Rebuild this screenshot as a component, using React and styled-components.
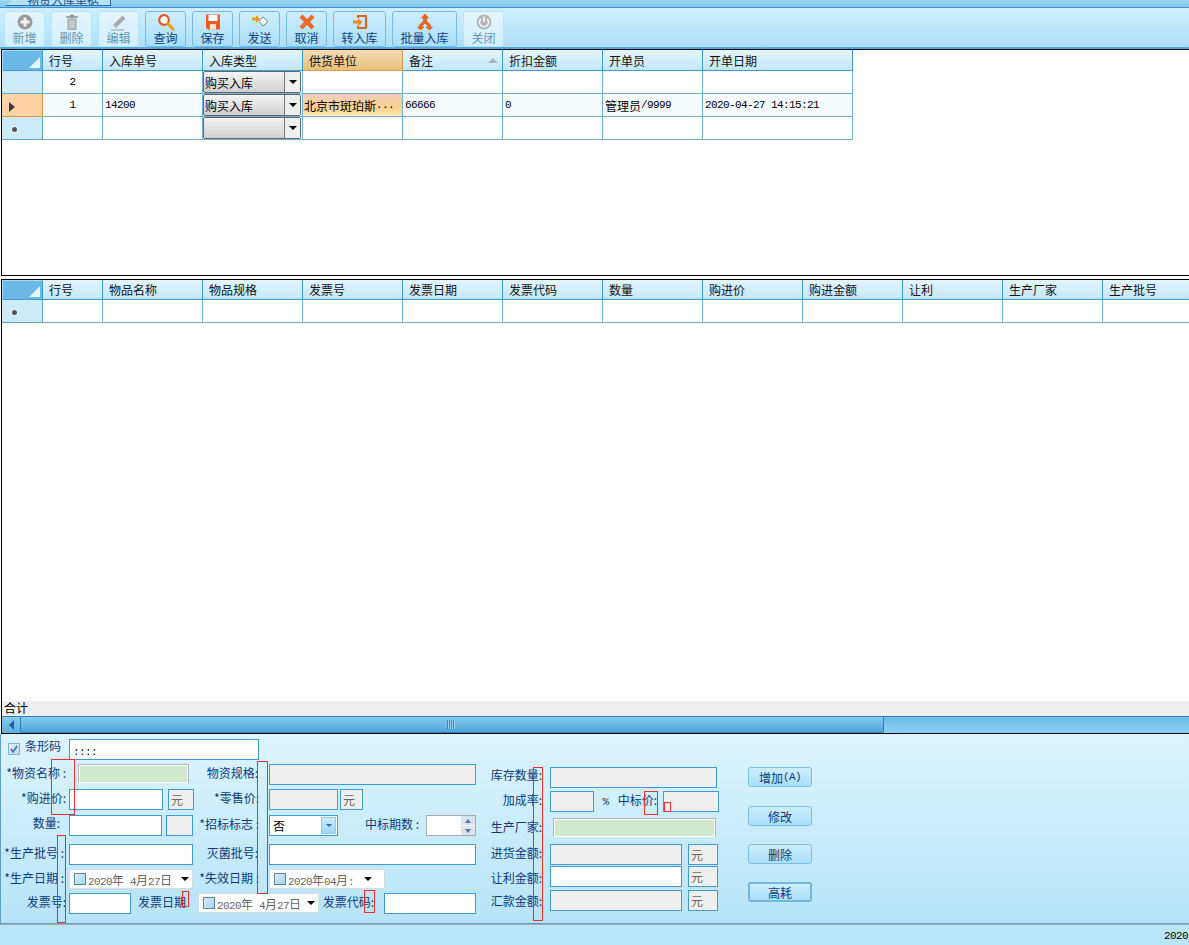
import React from "react";
import styled, { createGlobalStyle } from "styled-components";

const GlobalStyle = createGlobalStyle`
    html, body {
        margin: 0;
        padding: 0;
        background: #fff;
    }
    body {
        font-family: "Noto Sans CJK SC", "Liberation Sans", sans-serif;
        font-size: 12px;
        color: #000;
    }
    * { box-sizing: border-box; }
`;

const Page = styled.div`
    position: relative;
    width: 1189px;
    height: 945px;
    overflow: hidden;
    display: flex;
    flex-direction: column;
    background: #fff;
`;

const TopStrip = styled.div`
    height: 7px;
    flex: none;
    overflow: hidden;
    padding-left: 5px;
    background: linear-gradient(#9ad5f1, #7fc6ea);
`;

const Tab = styled.div`
    width: 106px;
    height: 6px;
    overflow: hidden;
    padding-left: 22px;
    line-height: 0;
    color: #1a4f8f;
    background: #b4e2f8;
    border-right: 1px solid #2d6fa8;
    border-bottom: 1px solid #2d6fa8;
    clip-path: polygon(8px 0, 100% 0, 100% 100%, 0 100%);
`;

const Toolbar = styled.div`
    height: 42px;
    flex: none;
    display: flex;
    gap: 6px;
    padding: 3px 0 0 4px;
    border-top: 1px solid #3d8fcf;
    border-bottom: 2px solid #53a8de;
    background: linear-gradient(#cfeffe, #aedff8);
`;

const ToolButton = styled.div`
    width: ${(p) => p.$w || 41}px;
    height: 36px;
    flex: none;
    display: flex;
    flex-direction: column;
    align-items: center;
    border-radius: 3px;
    border: 1px solid ${(p) => (p.$off ? "#b6e4f8" : "#74bce4")};
    background: ${(p) =>
        p.$off
            ? "linear-gradient(#e3f6ff, #d2f0fe)"
            : "linear-gradient(#cfeefe, #a9def8)"};
    color: ${(p) => (p.$off ? "#5f97b2" : "#0d3f80")};
    line-height: 13px;

    & svg {
        display: block;
        width: 18px;
        height: 18px;
        margin-top: 1px;
    }
`;

const GridPane = styled.div`
    margin-left: 1px;
    flex: none;
    height: ${(p) => p.$h}px;
    display: flex;
    flex-direction: column;
    overflow: hidden;
    background: #fff;
    border-left: 1px solid #000;
    border-top: 1px solid #000;
    border-bottom: 1px solid #000;
`;

const PaneGap = styled.div`
    height: 3px;
    flex: none;
`;

const GridBody = styled.div`
    flex: 1;
    min-height: 0;
    overflow: hidden;
`;

const GridRow = styled.div`
    display: flex;
    width: max-content;
    height: ${(p) => p.$h || 23}px;
    background: ${(p) => (p.$active ? "#f5fbfe" : "#fff")};
`;

const HeadCell = styled.div`
    width: ${(p) => p.$w || 100}px;
    flex: none;
    position: relative;
    padding-left: 6px;
    display: flex;
    align-items: center;
    color: #111;
    border-right: 1px solid ${(p) => (p.$hot ? "#e8983f" : "#3f9ad6")};
    border-bottom: 1px solid ${(p) => (p.$hot ? "#e8983f" : "#3f9ad6")};
    background: ${(p) =>
        p.$hot
            ? "linear-gradient(#f6dcb4, #e6c07c)"
            : "linear-gradient(#e4f6ff, #c2e6f9)"};
`;

const SortMark = styled.span`
    position: absolute;
    right: 4px;
    top: 8px;
    width: 0;
    height: 0;
    border-left: 5px solid transparent;
    border-right: 5px solid transparent;
    border-bottom: 5px solid #a9b4ba;
`;

const Corner = styled.div`
    width: 41px;
    flex: none;
    position: relative;
    background: #6cb9e8;
    border: 1px solid #a5daf5;
    border-right: 1px solid #3f9ad6;
    border-bottom: 1px solid #3f9ad6;

    &::after {
        content: "";
        position: absolute;
        right: 2px;
        bottom: 2px;
        width: 0;
        height: 0;
        border-left: 11px solid transparent;
        border-bottom: 11px solid #e6f6fd;
    }
`;

const RowHead = styled.div`
    width: 41px;
    flex: none;
    display: flex;
    align-items: center;
    padding-left: ${(p) => (p.$active ? 7 : 10)}px;
    background: ${(p) => (p.$active ? "#fdd2a4" : "#cdeafa")};
    border-right: 1px solid ${(p) => (p.$active ? "#e8983f" : "#5ba7d6")};
    border-bottom: 1px solid ${(p) => (p.$active ? "#e8983f" : "#5ba7d6")};
`;

const RowArrow = styled.span`
    margin-top: 3px;
    width: 0;
    height: 0;
    border-top: 5px solid transparent;
    border-bottom: 5px solid transparent;
    border-left: 6px solid #3d3d3d;
`;

const NewDot = styled.span`
    margin-top: 3px;
    width: 5px;
    height: 5px;
    border-radius: 50%;
    background: #555;
    box-shadow: 0 0 0 1px #e8f4fa;
`;

const Cell = styled.div`
    width: ${(p) => p.$w || 100}px;
    flex: none;
    display: flex;
    align-items: center;
    justify-content: ${(p) => (p.$center ? "center" : "flex-start")};
    padding-left: ${(p) => (p.$center ? 0 : p.$hot ? 1 : 2)}px;
    white-space: nowrap;
    border-right: 1px solid #6fb0d5;
    border-bottom: 1px solid #6fb0d5;
    background: ${(p) =>
        p.$hot ? "linear-gradient(#f1cdbb, #fbd290 65%, #ffe9ba)" : "transparent"};
`;

const Mono = styled.span`
    font-family: "Liberation Mono", monospace;
    font-size: 11px;
    letter-spacing: -0.6px;
`;

const ComboCell = styled.div`
    width: 100px;
    flex: none;
    display: flex;
    align-items: stretch;
    padding: 0 1px 0 0;
    border-right: 1px solid #6fb0d5;
    border-bottom: 1px solid #6fb0d5;
`;

const Combo = styled.div`
    flex: 1;
    display: flex;
    align-items: center;
    justify-content: space-between;
    padding-left: 1px;
    border: 1px solid #666;
    border-radius: 2px;
    background: linear-gradient(#f4f4f4, #d0d0d0);
`;

const ComboArrow = styled.div`
    width: 16px;
    align-self: stretch;
    display: flex;
    align-items: center;
    justify-content: center;
    border-left: 1px solid #777;
    background: #efefef;

    &::after {
        content: "";
        width: 0;
        height: 0;
        border-left: 4px solid transparent;
        border-right: 4px solid transparent;
        border-top: 4px solid #000;
    }
`;

const SumBar = styled.div`
    height: 15px;
    flex: none;
    padding-left: 2px;
    line-height: 13px;
    background: #efefef;
`;

const ScrollBar = styled.div`
    height: 17px;
    flex: none;
    display: flex;
    border-top: 1px solid #2c7fbf;
    background: linear-gradient(#6fbce8, #8bcff1);
`;

const ScrollLeft = styled.div`
    width: 18px;
    flex: none;
    display: flex;
    align-items: center;
    justify-content: center;
    background: linear-gradient(#8acbee, #5cafe0);

    &::after {
        content: "";
        width: 0;
        height: 0;
        border-top: 5px solid transparent;
        border-bottom: 5px solid transparent;
        border-right: 5px solid #1f5fa5;
    }
`;

const ScrollThumb = styled.div`
    width: 864px;
    flex: none;
    display: flex;
    align-items: center;
    justify-content: center;
    border: 1px solid #2c7fbf;
    border-top: none;
    border-radius: 0 0 2px 2px;
    background: linear-gradient(#86ccf0, #4ea3da);
`;

const Grip = styled.div`
    width: 8px;
    height: 9px;
    margin-left: -2px;
    background: repeating-linear-gradient(90deg, #3f86bd 0 1px, #9ad3f1 1px 2px);
`;

const Form = styled.div`
    height: 190px;
    flex: none;
    display: flex;
    padding-top: 5px;
    background: linear-gradient(#dcf5ff, #b8e3f8);
    box-shadow: inset 1px 0 0 #5a9fcf, inset 0 -1px 0 #5a9fcf;
`;

const LeftBlock = styled.div`
    width: 476px;
    flex: none;
`;

const RightBlock = styled.div`
    width: 242px;
    flex: none;
    margin: 28px 0 0 2px;
`;

const ButtonBlock = styled.div`
    width: 64px;
    flex: none;
    margin: 28px 0 0 28px;
    display: flex;
    flex-direction: column;
    gap: 18px;

    & > :nth-child(2) {
        margin-top: 1px;
    }
`;

const FormRow = styled.div`
    display: flex;
    align-items: flex-start;
    height: ${(p) => p.$h}px;
`;

const Label = styled.div`
    width: ${(p) => p.$w}px;
    height: 21px;
    flex: none;
    padding-right: ${(p) => p.$pr}px;
    text-align: right;
    line-height: ${(p) => p.$lh || 18}px;
    white-space: nowrap;
    color: #0b3a7a;
`;

const Field = styled.div`
    width: ${(p) => p.$w}px;
    height: 21px;
    flex: none;
    margin-left: ${(p) => p.$ml || 0}px;
    border: 1px solid #3f9bd8;
    background: ${(p) => (p.$gray ? "#efefef" : "#fff")};
`;

const Unit = styled(Field)`
    padding-left: 2px;
    line-height: 19px;
    color: #666;
    background: #efefef;
`;

const GreenField = styled.div`
    width: ${(p) => p.$w}px;
    height: 19px;
    flex: none;
    margin-left: ${(p) => p.$ml || 0}px;
    border: 1px solid #b5b5b5;
    border-bottom: none;
    box-shadow: inset 0 0 0 1px #fff;
    background: #cfe9cf;
`;

const BarcodeBox = styled(Field)`
    padding-left: 3px;
    line-height: 20px;
`;

const CheckWrap = styled.div`
    width: 69px;
    flex: none;
    display: flex;
    align-items: flex-start;
    gap: 5px;
    padding-left: 8px;
    line-height: 14px;
    color: #0b3a7a;
`;

const CheckBox = styled.div`
    width: 12px;
    height: 12px;
    flex: none;
    margin-top: 4px;
    border: 1px solid #7fb6d6;
    background: linear-gradient(135deg, #e8e8f4, #bcdcf2);

    & svg {
        display: block;
        width: 10px;
        height: 10px;
    }
`;

const DateBox = styled.div`
    width: ${(p) => p.$w}px;
    height: 20px;
    flex: none;
    display: flex;
    align-items: center;
    gap: 2px;
    padding-left: 4px;
    color: #666;
    white-space: nowrap;
    background: #fff;
    border: 1px solid #d6dde0;
    border-radius: 2px;
`;

const DateCheck = styled.div`
    width: 12px;
    height: 12px;
    flex: none;
    border: 1px solid #55859f;
    background: linear-gradient(135deg, #d5ecfb, #a6d6f3);
`;

const DateArrow = styled.div`
    margin-left: auto;
    margin-right: ${(p) => p.$mr}px;
    width: 0;
    height: 0;
    border-left: 4px solid transparent;
    border-right: 4px solid transparent;
    border-top: 4px solid #000;
`;

const Select = styled.div`
    width: 69px;
    height: 21px;
    flex: none;
    display: flex;
    align-items: center;
    justify-content: space-between;
    padding: 0 1px 0 3px;
    border: 1px solid #3f9bd8;
    background: #fff;
`;

const SelectButton = styled.div`
    width: 15px;
    height: 17px;
    display: flex;
    align-items: center;
    justify-content: center;
    border: 1px solid #8ccbec;
    background: linear-gradient(#cdeafa, #9ed6f3);

    &::after {
        content: "";
        width: 0;
        height: 0;
        border-left: 3px solid transparent;
        border-right: 3px solid transparent;
        border-top: 3px solid #2c6ca8;
    }
`;

const Spinner = styled.div`
    width: 50px;
    height: 21px;
    flex: none;
    display: flex;
    justify-content: flex-end;
    border: 1px solid #aaa;
    background: #fff;
`;

const SpinButtons = styled.div`
    width: 14px;
    display: flex;
    flex-direction: column;
    gap: 1px;
`;

const SpinButton = styled.div`
    flex: 1;
    display: flex;
    align-items: center;
    justify-content: center;
    background: #d9e4ec;

    &::after {
        content: "";
        width: 0;
        height: 0;
        border-left: 3px solid transparent;
        border-right: 3px solid transparent;
        ${(p) => (p.$down ? "border-top" : "border-bottom")}: 4px solid #5c6fa8;
    }
`;

const Percent = styled.div`
    width: 23px;
    flex: none;
    text-align: center;
    line-height: 18px;
    color: #0b3a7a;
`;

const ActionButton = styled.div`
    width: 64px;
    height: 20px;
    display: flex;
    align-items: center;
    justify-content: center;
    border-radius: 3px;
    color: #0b3a7a;
    border: ${(p) => (p.$focus ? "2px solid #73b6e0" : "1px solid #7cc0e6")};
    background: linear-gradient(#cdeefe, #aadff8);
`;

const StatusBar = styled.div`
    flex: 1;
    display: flex;
    align-items: flex-end;
    justify-content: flex-end;
    padding: 0 1px 3px 0;
    border-top: 1px solid #a9a9a9;
    background: #bbe6fa;
`;

const RedMark = styled.div`
    position: absolute;
    left: ${(p) => p.$x}px;
    top: ${(p) => p.$y}px;
    width: ${(p) => p.$w}px;
    height: ${(p) => p.$h}px;
    border: 1px solid #f02d2d;
    pointer-events: none;
`;

const PlusIcon = () => (
    <svg viewBox="0 0 18 18">
        <circle cx="9" cy="9" r="7.5" fill="#9a9a9a" />
        <path d="M9 4.5v9M4.5 9h9" stroke="#f2f2f2" strokeWidth="3" />
    </svg>
);

const TrashIcon = () => (
    <svg viewBox="0 0 18 18">
        <path d="M3 4h12M7 2.5h4" stroke="#8c8c8c" strokeWidth="1.6" />
        <path d="M4.5 5.5h9V17h-9z" fill="#a8a8a8" />
        <path d="M7 7v8.5M9 7v8.5M11 7v8.5" stroke="#e4e4e4" strokeWidth="1" />
    </svg>
);

const PencilIcon = () => (
    <svg viewBox="0 0 18 18">
        <path d="M3 12 12.5 2.5l3 3L6 15H3z" fill="#a9a9a9" />
        <path d="M3 12l3 3H3z" fill="#e8e8e8" />
        <path d="M1 17h13" stroke="#9a9a9a" strokeWidth="1" />
    </svg>
);

const SearchIcon = () => (
    <svg viewBox="0 0 18 18">
        <circle cx="7" cy="7" r="4.8" fill="#fff" stroke="#e2571c" strokeWidth="2.2" />
        <path d="M10.8 10.8 16 16" stroke="#f39a23" strokeWidth="3" strokeLinecap="round" />
    </svg>
);

const SaveIcon = () => (
    <svg viewBox="0 0 18 18">
        <path d="M2 1.5h14v15H4l-2-2z" fill="#ee5a24" />
        <path d="M4.5 2h9v6h-9z" fill="#fff" />
        <path d="M6 11h6v5.5H6z" fill="#fbe3d4" />
    </svg>
);

const SendIcon = () => (
    <svg viewBox="0 0 18 18">
        <path d="M1 4.500h4V2l4 4-4 4V7.500H1z" fill="#f09a1c" />
        <path d="M12 4l5 4.500-5 4.500-4-4.500z" fill="#fff" stroke="#6f7d86" strokeWidth="1" />
    </svg>
);

const CancelIcon = () => (
    <svg viewBox="0 0 18 18">
        <path d="M3 3l12 12M15 3 3 15" stroke="#ee6a2c" strokeWidth="4.200" />
    </svg>
);

const ImportIcon = () => (
    <svg viewBox="0 0 18 18">
        <path d="M6 2h10v14H6v-3h2v1h6V4H8v1H6z" fill="#e8621d" />
        <path d="M2 7.500h5V5l4.500 4L7 13v-2.500H2z" fill="#f08a22" />
    </svg>
);

const MergeIcon = () => (
    <svg viewBox="0 0 18 18">
        <path d="M9 1l3.500 4H10.500v3l4 4v2h2l-3 3-3.500-3h2v-1L9 10l-3 3v1h2l-3.500 3-3-3h2v-2l4-4V5H5.500z" fill="#e8621d" stroke="#e8621d" strokeWidth="0.8" />
    </svg>
);

const PowerIcon = () => (
    <svg viewBox="0 0 18 18">
        <circle cx="9" cy="9" r="7.500" fill="#b5b5b5" />
        <path d="M5.800 6a4.500 4.500 0 1 0 6.400 0" fill="none" stroke="#f2f2f2" strokeWidth="1.800" />
        <path d="M9 3.500v5.500" stroke="#f2f2f2" strokeWidth="2" />
    </svg>
);

const TOOLS = [
    { label: "新增", icon: PlusIcon, off: true },
    { label: "删除", icon: TrashIcon, off: true },
    { label: "编辑", icon: PencilIcon, off: true },
    { label: "查询", icon: SearchIcon },
    { label: "保存", icon: SaveIcon },
    { label: "发送", icon: SendIcon },
    { label: "取消", icon: CancelIcon },
    { label: "转入库", icon: ImportIcon, w: 53 },
    { label: "批量入库", icon: MergeIcon, w: 65 },
    { label: "关闭", icon: PowerIcon, off: true },
];

const TOP_HEAD = ["入库单号", "入库类型", "供货单位", "备注", "折扣金额", "开单员"];
const BOTTOM_HEAD = [
    "物品名称", "物品规格", "发票号", "发票日期", "发票代码", "数量",
    "购进价", "购进金额", "让利", "生产厂家", "生产批号",
];

const DatePicker = ({ w, mr, children }) => (
    <DateBox $w={w}>
        <DateCheck />
        {children}
        <DateArrow $mr={mr} />
    </DateBox>
);

const DateText = () => (
    <span>
        <Mono>2020</Mono>年<Mono>&nbsp;4</Mono>月<Mono>27</Mono>日
    </span>
);

const App = () => {
    return (
        <Page>
            <GlobalStyle />
            <TopStrip>
                <Tab>物资入库单据</Tab>
            </TopStrip>
            <Toolbar>
                {TOOLS.map(({ label, icon: Icon, off, w }) => (
                    <ToolButton key={label} $off={off} $w={w}>
                        <Icon />
                        {label}
                    </ToolButton>
                ))}
            </Toolbar>

            <GridPane $h={227}>
                <GridRow $h={21}>
                    <Corner />
                    <HeadCell $w={60}>行号</HeadCell>
                    {TOP_HEAD.map((h) => (
                        <HeadCell key={h} $hot={h === "供货单位"}>
                            {h}
                            {h === "备注" && <SortMark />}
                        </HeadCell>
                    ))}
                    <HeadCell $w={150}>开单日期</HeadCell>
                </GridRow>
                <GridRow>
                    <RowHead />
                    <Cell $w={60} $center><Mono>2</Mono></Cell>
                    <Cell />
                    <ComboCell><Combo>购买入库<ComboArrow /></Combo></ComboCell>
                    <Cell />
                    <Cell />
                    <Cell />
                    <Cell />
                    <Cell $w={150} />
                </GridRow>
                <GridRow $active>
                    <RowHead $active><RowArrow /></RowHead>
                    <Cell $w={60} $center><Mono>1</Mono></Cell>
                    <Cell><Mono>14200</Mono></Cell>
                    <ComboCell><Combo>购买入库<ComboArrow /></Combo></ComboCell>
                    <Cell $hot>北京市斑珀斯<Mono>...</Mono></Cell>
                    <Cell><Mono>66666</Mono></Cell>
                    <Cell><Mono>0</Mono></Cell>
                    <Cell>管理员<Mono>/9999</Mono></Cell>
                    <Cell $w={150}><Mono>2020-04-27 14:15:21</Mono></Cell>
                </GridRow>
                <GridRow>
                    <RowHead><NewDot /></RowHead>
                    <Cell $w={60} />
                    <Cell />
                    <ComboCell><Combo><span /><ComboArrow /></Combo></ComboCell>
                    <Cell />
                    <Cell />
                    <Cell />
                    <Cell />
                    <Cell $w={150} />
                </GridRow>
            </GridPane>

            <PaneGap />

            <GridPane $h={455}>
                <GridBody>
                    <GridRow $h={20}>
                        <Corner />
                        <HeadCell $w={60}>行号</HeadCell>
                        {BOTTOM_HEAD.map((h) => (
                            <HeadCell key={h}>{h}</HeadCell>
                        ))}
                    </GridRow>
                    <GridRow>
                        <RowHead><NewDot /></RowHead>
                        <Cell $w={60} />
                        {BOTTOM_HEAD.map((h) => (
                            <Cell key={h} />
                        ))}
                    </GridRow>
                </GridBody>
                <SumBar>合计</SumBar>
                <ScrollBar>
                    <ScrollLeft />
                    <ScrollThumb><Grip /></ScrollThumb>
                </ScrollBar>
            </GridPane>

            <Form>
                <LeftBlock>
                    <FormRow $h={25}>
                        <CheckWrap>
                            <CheckBox>
                                <svg viewBox="0 0 10 10">
                                    <path d="M2 5l2 3 4-6" fill="none" stroke="#2f6fb5" strokeWidth="1.500" />
                                </svg>
                            </CheckBox>
                            条形码
                        </CheckWrap>
                        <BarcodeBox $w={190}><Mono>::::</Mono></BarcodeBox>
                    </FormRow>
                    <FormRow $h={25}>
                        <Label $w={69} $pr={3}>*物资名称 :</Label>
                        <GreenField $w={111} $ml={9} />
                        <Label $w={80} $pr={11}>物资规格:</Label>
                        <Field $w={207} $gray />
                    </FormRow>
                    <FormRow $h={26}>
                        <Label $w={69} $pr={3}>*购进价:</Label>
                        <Field $w={94} />
                        <Unit $w={26} $ml={5}>元</Unit>
                        <Label $w={75} $pr={10}>*零售价:</Label>
                        <Field $w={69} $gray />
                        <Unit $w={23} $ml={2}>元</Unit>
                    </FormRow>
                    <FormRow $h={29}>
                        <Label $w={69} $pr={9} $lh={16}>数量:</Label>
                        <Field $w={93} />
                        <Field $w={27} $ml={4} $gray />
                        <Label $w={76} $pr={10} $lh={17}>*招标标志 :</Label>
                        <Select>否<SelectButton /></Select>
                        <Label $w={88} $pr={7} $lh={17}>中标期数 :</Label>
                        <Spinner>
                            <SpinButtons>
                                <SpinButton />
                                <SpinButton $down />
                            </SpinButtons>
                        </Spinner>
                    </FormRow>
                    <FormRow $h={25}>
                        <Label $w={69} $pr={5}>*生产批号 :</Label>
                        <Field $w={124} />
                        <Label $w={76} $pr={11}>灭菌批号:</Label>
                        <Field $w={207} />
                    </FormRow>
                    <FormRow $h={24}>
                        <Label $w={69} $pr={5}>*生产日期 :</Label>
                        <DatePicker w={124} mr={3}><DateText /></DatePicker>
                        <Label $w={76} $pr={10}>*失效日期 :</Label>
                        <DatePicker w={116} mr={12}>
                            <span><Mono>2020</Mono>年<Mono>04</Mono>月<Mono>:</Mono></span>
                        </DatePicker>
                    </FormRow>
                    <FormRow $h={21}>
                        <Label $w={69} $pr={3}>发票号:</Label>
                        <Field $w={62} />
                        <Label $w={67} $pr={12}>发票日期</Label>
                        <DatePicker w={121} mr={3}><DateText /></DatePicker>
                        <Label $w={65} $pr={10}>发票代码:</Label>
                        <Field $w={92} />
                    </FormRow>
                </LeftBlock>

                <RightBlock>
                    <FormRow $h={24}>
                        <Label $w={72} $pr={8} $lh={16}>库存数量:</Label>
                        <Field $w={167} $gray />
                    </FormRow>
                    <FormRow $h={27}>
                        <Label $w={72} $pr={8}>加成率:</Label>
                        <Field $w={44} $gray />
                        <Percent><Mono>%</Mono></Percent>
                        <Label $w={46} $pr={6}>中标价:</Label>
                        <Field $w={56} $gray />
                    </FormRow>
                    <FormRow $h={26}>
                        <Label $w={72} $pr={8}>生产厂家:</Label>
                        <GreenField $w={163} $ml={3} />
                    </FormRow>
                    <FormRow $h={22}>
                        <Label $w={72} $pr={8}>进货金额:</Label>
                        <Field $w={132} $gray />
                        <Unit $w={30} $ml={6}>元</Unit>
                    </FormRow>
                    <FormRow $h={24}>
                        <Label $w={72} $pr={8} $lh={24}>让利金额:</Label>
                        <Field $w={132} />
                        <Unit $w={30} $ml={6}>元</Unit>
                    </FormRow>
                    <FormRow $h={21}>
                        <Label $w={72} $pr={8} $lh={22}>汇款金额:</Label>
                        <Field $w={132} $gray />
                        <Unit $w={30} $ml={6}>元</Unit>
                    </FormRow>
                </RightBlock>

                <ButtonBlock>
                    <ActionButton>增加<Mono>(A)</Mono></ActionButton>
                    <ActionButton>修改</ActionButton>
                    <ActionButton>删除</ActionButton>
                    <ActionButton $focus>高耗</ActionButton>
                </ButtonBlock>
            </Form>

            <StatusBar><Mono>2020</Mono></StatusBar>

            <RedMark $x={51} $y={759} $w={24} $h={56} />
            <RedMark $x={257} $y={761} $w={11} $h={133} />
            <RedMark $x={57} $y={835} $w={9} $h={88} />
            <RedMark $x={182} $y={891} $w={7} $h={16} />
            <RedMark $x={364} $y={890} $w={11} $h={23} />
            <RedMark $x={533} $y={767} $w={10} $h={154} />
            <RedMark $x={644} $y={791} $w={14} $h={24} />
            <RedMark $x={664} $y={802} $w={7} $h={10} />
        </Page>
    );
};

export default App;
